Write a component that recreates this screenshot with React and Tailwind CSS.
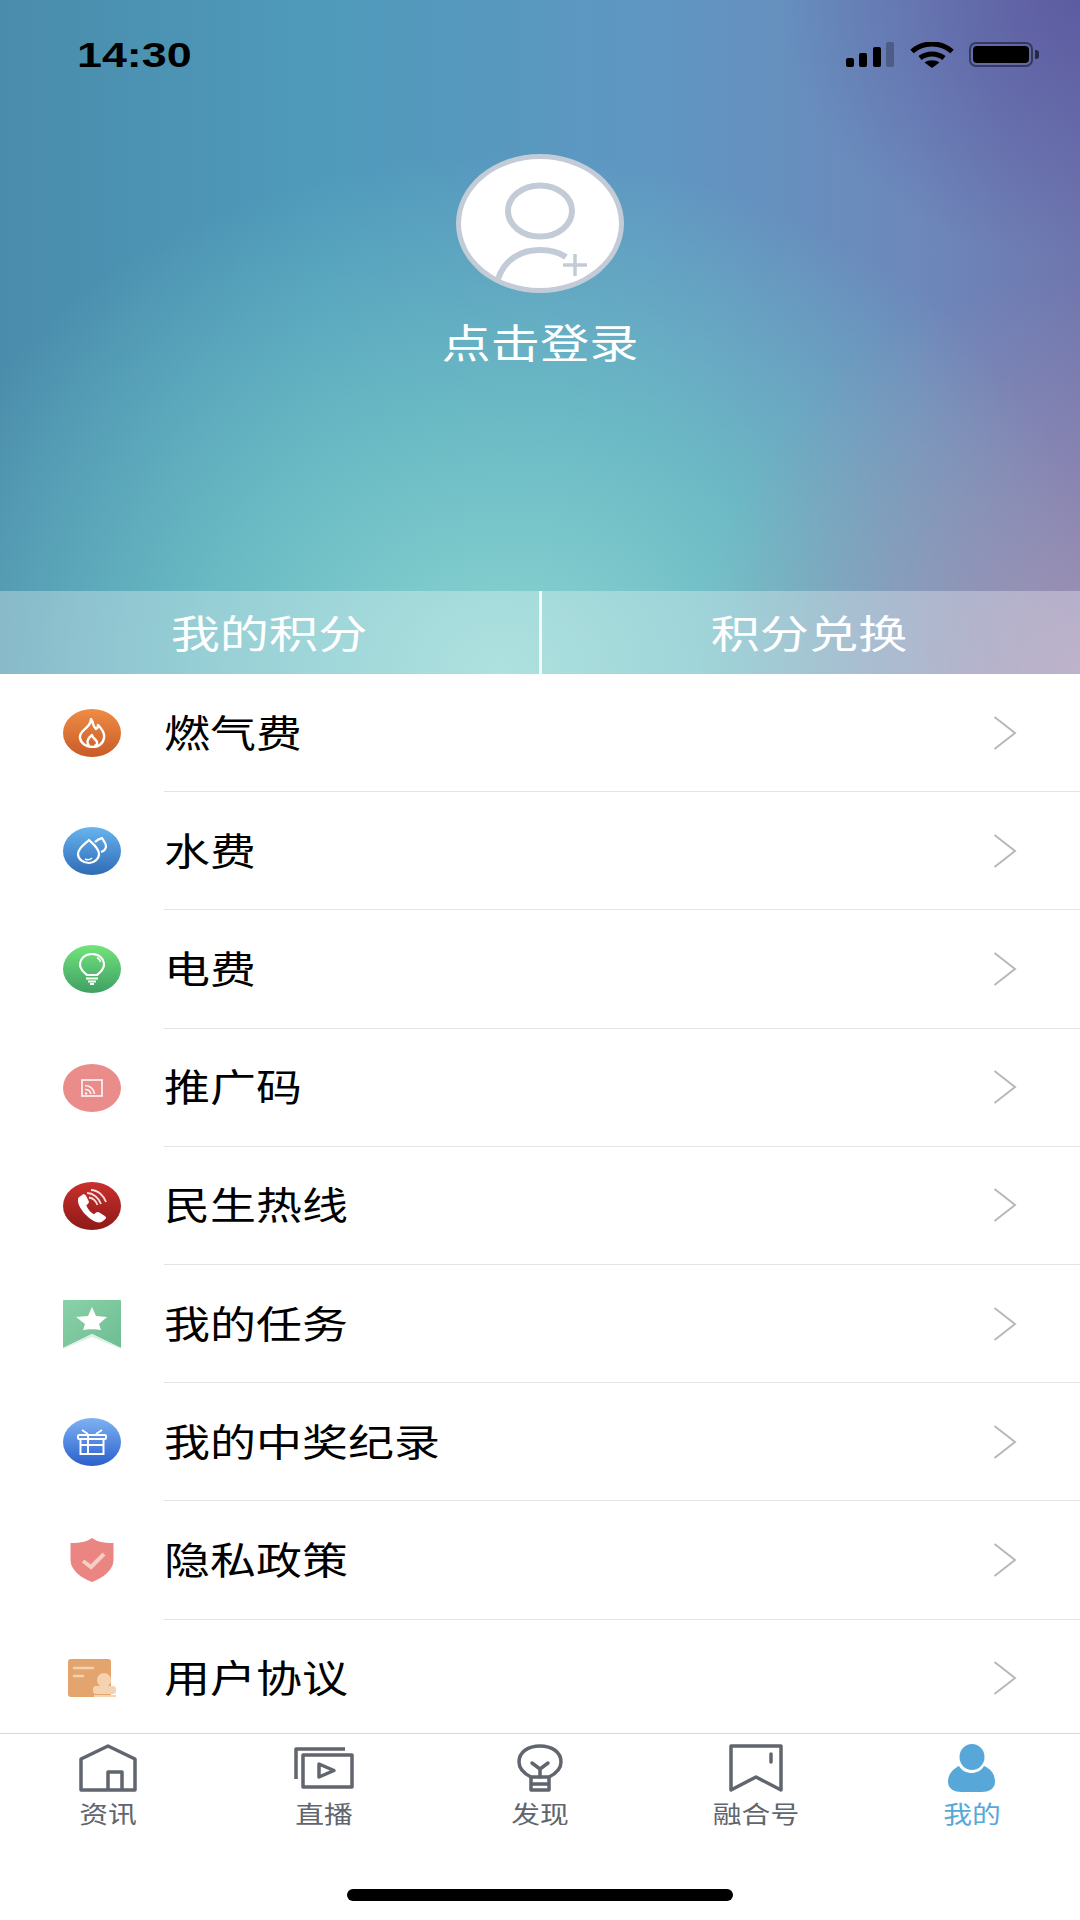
const font = 'font-["Noto_Sans_CJK_SC","Liberation_Sans",sans-serif]';

// the whole screen is stretched sideways by about 1.2, so wide text uses scale-x
function Wide({ className = '', children }) {
  return <span className={`inline-block whitespace-nowrap ${className}`}>{children}</span>;
}

function Signal() {
  return (
    <svg width="49" height="25" viewBox="0 0 49 25">
      <rect x="0" y="16" width="8" height="9" rx="2" fill="#000" />
      <rect x="13" y="11" width="8" height="14" rx="2" fill="#000" />
      <rect x="27" y="5" width="8" height="20" rx="2" fill="#000" />
      <rect x="40" y="0" width="8" height="25" rx="2" fill="#000" opacity="0.25" />
    </svg>
  );
}

function Wifi() {
  return (
    <svg width="44" height="26" viewBox="0 0 44 26" fill="none">
      <path d="M2 9.500C13 -0.500 31 -0.500 42 9.500" stroke="#000" strokeWidth="5" />
      <path d="M10 16C17 10.500 27 10.500 34 16" stroke="#000" strokeWidth="5" />
      <path d="M22 26L14.500 20.500C18.500 17.500 25.500 17.500 29.500 20.500Z" fill="#000" />
    </svg>
  );
}

function Battery() {
  return (
    <div className="flex items-center gap-[2px]">
      <div className="w-[64px] h-[25px] rounded-[7px] border-2 border-[#000]/45 p-[2px]">
        <div className="w-full h-full rounded-[4px] bg-black" />
      </div>
      <div className="w-[4px] h-[9px] rounded-r-[3px] bg-black/60" />
    </div>
  );
}

function AvatarGlyph() {
  return (
    <svg width="168" height="139" viewBox="0 0 168 139" fill="none" className="absolute left-[-5px] top-[-5px]">
      <ellipse cx="84" cy="57" rx="32" ry="25.500" stroke="#c3ccd6" strokeWidth="6" />
      <path d="M42 125C49 105 65 96 84 96C95 96 103 98 110 103" stroke="#c3ccd6" strokeWidth="6" />
      <path d="M107 111H131M119 100V122" stroke="#c3ccd6" strokeWidth="3.500" />
    </svg>
  );
}

const FlameIcon = () => (
  <svg width="30" height="30" viewBox="0 0 28 30" fill="none" stroke="#fff" strokeWidth="2.400" strokeLinejoin="round">
    <path d="M13 1C16 5 14 8 18 11C20 10 20 8 20 7C24 11 27 15 26 20C25 26 20 29 15 29C9 29 3 26 2 20C1 14 7 12 10 8C12 6 13 3 13 1Z" />
    <path d="M11 28C8 24 10 20 14 17C14 20 18 21 19 24C19.500 26 18 28 16 28" />
  </svg>
);

const DropIcon = () => (
  <svg width="32" height="28" viewBox="0 0 32 28" fill="none" stroke="#fff" strokeWidth="2.200">
    <path d="M13 3C17 7 23 11 23 17C23 22 18 26 13 26C7 26 2 22 2 17C2 11 9 7 13 3Z" />
    <path d="M19 5C21 3 23 2 26 1C27 3 30 6 30 9C30 12 28 14 25 15" />
    <path d="M9 22C11 23 14 23 16 21" strokeWidth="1.500" />
  </svg>
);

const BulbIcon = () => (
  <svg width="26" height="32" viewBox="0 0 26 32" fill="none" stroke="#fff" strokeWidth="2.200">
    <path d="M8 22C4 19 1 16 1 11.500C1 5.500 6 1 13 1C20 1 25 5.500 25 11.500C25 16 22 19 18 22Z" />
    <path d="M7 25.500H19M9 28.500H17M11 31H15" />
    <path d="M18 4.500C20 5.500 21 7 21.500 9" strokeWidth="1.500" />
  </svg>
);

const CastIcon = () => (
  <svg width="22" height="18" viewBox="0 0 22 18" fill="none" stroke="#fff" strokeWidth="1.700" opacity="0.9">
    <rect x="1" y="1" width="20" height="16" />
    <path d="M4 6.500C9 6.500 13 10 13.500 15M4 10.500C7 10.500 9.500 12.500 10 15" />
    <circle cx="5" cy="14.500" r="1.200" fill="#fff" stroke="none" />
  </svg>
);

const PhoneIcon = () => (
  <svg width="34" height="34" viewBox="0 0 32 34" fill="none">
    <path d="M3 9L7 6C8 5.500 9 6 9.500 7L12 12C12.500 13 12 14 11.500 14.500L9.500 16C11 20 14 24 18 26L20.500 24C21 23.500 22 23.500 23 24L28.500 27.500C29.500 28 29.500 29 29 29.500L26 32C23 34 18 32 13 28C6 22 1 14 3 9Z" fill="#fff" stroke="#fff" strokeWidth="1.200" />
    <path d="M11 4C17 4 23 9 25 15M13 8.500C17 9 20 12 21.500 16M15 1C22 1 28 7 30 13" stroke="#fff" strokeWidth="1.800" opacity="0.85" />
  </svg>
);

const GiftIcon = () => (
  <svg width="30" height="26" viewBox="0 0 30 26" fill="none" stroke="#fff" strokeWidth="2">
    <path d="M5 1L11 5M25 1L19 5" />
    <rect x="1" y="6" width="28" height="4" rx="1" />
    <rect x="3.500" y="10" width="23" height="15" />
    <path d="M11 6V25M3.500 16H26.500" />
  </svg>
);

function Badge({ bg, glyph }) {
  return <div className={`w-[58px] h-[48px] rounded-[50%] flex items-center justify-center ${bg}`}>{glyph}</div>;
}

const TaskIcon = () => (
  <svg width="58" height="48" viewBox="0 0 58 48">
    <defs>
      <linearGradient id="task" x1="0" y1="0" x2="1" y2="1">
        <stop offset="0" stopColor="#8ad1a8" />
        <stop offset="1" stopColor="#6fbd92" />
      </linearGradient>
    </defs>
    <path d="M1 0H57C57.500 0 58 .5 58 1V48L29 34L0 48V1C0 .5 .5 0 1 0Z" fill="url(#task)" />
    <path d="M29 34L58 48H56L29 37L2 48H0Z" fill="#dcefe4" />
    <path d="M29 7L33 16L44 17L36 24L38 30C33 29 25 29 20 30L22 24L13 17L25 16Z" fill="#fff" />
  </svg>
);

const ShieldIcon = () => (
  <svg width="58" height="44" viewBox="0 0 58 44">
    <path d="M29 0C33 3 39 5 50.500 5V22C50.500 32 40 40 29 44C18 40 7.500 32 7.500 22V5C19 5 25 3 29 0Z" fill="#ea8581" />
    <path d="M20 23L28 29L41 16" fill="none" stroke="#f6cfc4" strokeWidth="4" />
  </svg>
);

const CardIcon = () => (
  <svg width="58" height="40" viewBox="0 0 58 40">
    <rect x="5" y="0" width="43" height="38" rx="3" fill="#e3a46e" />
    <path d="M11 9H30M11 17H20" stroke="#f5d3b0" strokeWidth="2.500" strokeLinecap="round" />
    <circle cx="41" cy="21" r="7" fill="#f5d3b0" />
    <rect x="30" y="27" width="23" height="8" rx="3" fill="#f5d3b0" />
    <path d="M31 37H53" stroke="#f5d3b0" strokeWidth="2" />
  </svg>
);

const menuItems = [
  { label: '燃气费', icon: <Badge bg="bg-gradient-to-b from-[#ef8c45] to-[#c85b27]" glyph={<FlameIcon />} /> },
  { label: '水费', icon: <Badge bg="bg-gradient-to-b from-[#68b4ee] to-[#2f6bb5]" glyph={<DropIcon />} /> },
  { label: '电费', icon: <Badge bg="bg-gradient-to-b from-[#72e47c] to-[#3fa063]" glyph={<BulbIcon />} /> },
  { label: '推广码', icon: <Badge bg="bg-[#ea8d8a]" glyph={<CastIcon />} /> },
  { label: '民生热线', icon: <Badge bg="bg-gradient-to-b from-[#c9302c] to-[#8e1a18]" glyph={<PhoneIcon />} /> },
  { label: '我的任务', icon: <TaskIcon /> },
  { label: '我的中奖纪录', icon: <Badge bg="bg-gradient-to-b from-[#7fb2f3] to-[#2b5fcb]" glyph={<GiftIcon />} /> },
  { label: '隐私政策', icon: <ShieldIcon /> },
  { label: '用户协议', icon: <CardIcon /> },
];

const Chevron = () => (
  <svg width="24" height="34" viewBox="0 0 24 34" fill="none" stroke="#b8b8b8" strokeWidth="2">
    <path d="M1.500 1L22 17L1.500 33" />
  </svg>
);

function MenuRow({ label, icon }) {
  return (
    <div className="h-[118.2px] shrink-0 flex items-center pl-[63px]">
      <div className="w-[58px] flex justify-center shrink-0">{icon}</div>
      <div className="ml-[43px] flex-1 h-full flex items-center border-b-[1.5px] border-[#e4e4e4] pr-[63px]">
        <Wide className="origin-left scale-x-[1.21] -translate-y-[2px] text-[38px] leading-[50px] text-black">{label}</Wide>
        <div className="ml-auto"><Chevron /></div>
      </div>
    </div>
  );
}

const tabIcon = { stroke: '#60656e', strokeWidth: 3.5, fill: 'none', strokeLinejoin: 'round' };

const tabs = [
  {
    label: '资讯',
    icon: (
      <svg width="58" height="48" viewBox="0 0 58 48" {...tabIcon}>
        <path d="M2 46V15L29 2L56 15V46Z" />
        <path d="M29 46V28H43V46" />
      </svg>
    ),
  },
  {
    label: '直播',
    icon: (
      <svg width="60" height="42" viewBox="0 0 60 42" {...tabIcon}>
        <path d="M2 32V2H51" />
        <rect x="9" y="8" width="49" height="32" />
        <path d="M25 17L40 23.500L25 30Z" />
      </svg>
    ),
  },
  {
    label: '发现',
    icon: (
      <svg width="46" height="48" viewBox="0 0 46 48" {...tabIcon}>
        <path d="M14 33C6 29 2 24 2 18C2 8 11 2 23 2C35 2 44 8 44 18C44 24 40 29 32 33" />
        <path d="M15 19L23 25L31 19M23 25V33" strokeLinecap="round" />
        <path d="M14 33H32V46H14ZM14 40H32" />
      </svg>
    ),
  },
  {
    label: '融合号',
    icon: (
      <svg width="54" height="48" viewBox="0 0 54 48" {...tabIcon}>
        <path d="M2 2H52V46L27 33L2 46Z" />
        <path d="M42 10V18" strokeLinecap="round" />
      </svg>
    ),
  },
  {
    label: '我的',
    active: true,
    icon: (
      <svg width="48" height="48" viewBox="0 0 48 48">
        <ellipse cx="24" cy="13" rx="12.500" ry="13" fill="#58a7d9" />
        <path d="M11 22C14 27 19 29 23.500 29C28 29 33 27 36 22C43 25 47 30 47 38C47 45 40 48 34 48H13C7 48 0 45 0 38C0 30 5 25 11 22Z" fill="#58a7d9" />
      </svg>
    ),
  },
];

export default function App() {
  return (
    <div className={`w-[1080px] h-[1920px] flex flex-col overflow-hidden bg-white ${font}`}>
      {/* header */}
      <div className="h-[674px] shrink-0 flex flex-col bg-[radial-gradient(ellipse_300px_260px_at_1080px_0px,#58559ecc_0%,#58559e00_100%),radial-gradient(ellipse_380px_400px_at_1080px_674px,#a292b4_0%,#a292b400_100%),radial-gradient(ellipse_620px_520px_at_500px_674px,#8bd5d1_0%,#6fc2c6cc_50%,#6cc0c600_100%),linear-gradient(90deg,#4a8cab_0%,#4f9abb_30%,#5f97c2_60%,#6d88bb_85%,#6f76ae_100%)]">
        <div className="mt-[42px] h-[25px] flex items-center justify-between pl-[77px] pr-[41px]">
          <span className="inline-block origin-left scale-x-[1.28] font-['Liberation_Sans'] font-bold text-[35px] leading-[25px] text-black">14:30</span>
          <div className="flex items-center">
            <Signal />
            <div className="ml-[15px]"><Wifi /></div>
            <div className="ml-[15px]"><Battery /></div>
          </div>
        </div>

        <div className="self-center relative mt-[87px] w-[168px] h-[139px] rounded-[50%] border-[5px] border-[#c3ccd6] bg-white shrink-0">
          <AvatarGlyph />
        </div>
        <div className="mt-[23px] text-center h-[50px]">
          <Wide className="scale-x-[1.23] text-[40px] leading-[50px] text-white">点击登录</Wide>
        </div>

        <div className="mt-auto h-[83px] flex bg-white/30">
          <div className="flex-1 flex items-center justify-center">
            <Wide className="scale-x-[1.26] -translate-y-[2px] text-[39px] leading-[50px] text-white">我的积分</Wide>
          </div>
          <div className="w-[3px] bg-white/85" />
          <div className="flex-1 flex items-center justify-center">
            <Wide className="scale-x-[1.26] -translate-x-[2px] -translate-y-[2px] text-[39px] leading-[50px] text-white">积分兑换</Wide>
          </div>
        </div>
      </div>

      {/* menu */}
      <div className="flex-1 min-h-0 overflow-hidden flex flex-col">
        {menuItems.map((item) => (
          <MenuRow key={item.label} label={item.label} icon={item.icon} />
        ))}
      </div>

      {/* tab bar */}
      <div className="h-[187px] shrink-0 border-t-[1.5px] border-[#d8d8d8] flex flex-col">
        <div className="grid grid-cols-5 pt-[9px]">
          {tabs.map((tab) => (
            <div key={tab.label} className="flex flex-col items-center">
              <div className="h-[50px] flex items-center justify-center">{tab.icon}</div>
              <Wide className={`mt-[5px] scale-x-[1.2] text-[24px] leading-[30px] ${tab.active ? 'text-[#58a7d9]' : 'text-[#60656e]'}`}>{tab.label}</Wide>
            </div>
          ))}
        </div>
        <div className="mt-auto mb-[19px] self-center w-[386px] h-[12px] rounded-full bg-black" />
      </div>
    </div>
  );
}
